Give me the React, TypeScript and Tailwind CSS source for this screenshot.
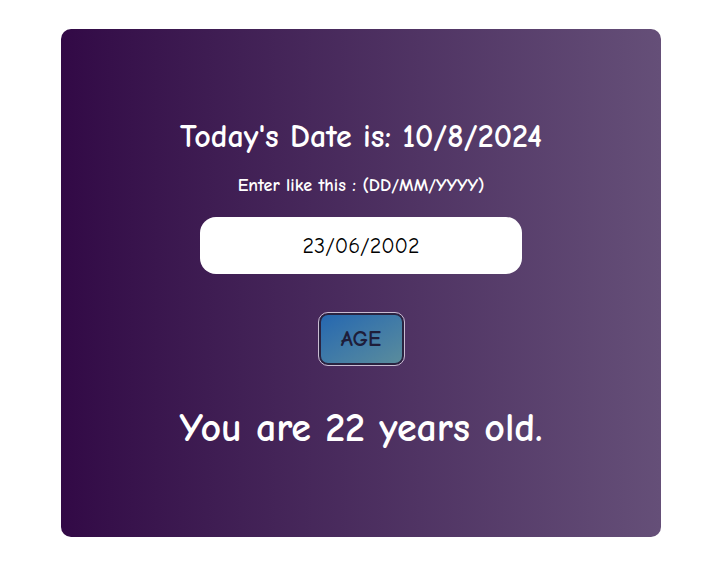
export default function App() {
  const font = { fontFamily: '"Comic Sans MS", "Comic Neue", "Open Sans", sans-serif' };
  return (
    <div className="min-h-screen bg-white flex justify-center pt-[29px] pr-[2px]" style={font}>
      <div className="w-[600px] h-[508px] rounded-[10px] bg-gradient-to-r from-[#320946] to-[#654f78] flex flex-col items-center text-white">
        <h1 className="mt-[92px] text-[32px] font-bold leading-none">Today's Date is: 10/8/2024</h1>
        <p className="mt-[24px] text-[18px] font-bold leading-none">Enter like this : (DD/MM/YYYY)</p>
        <input
          defaultValue="23/06/2002"
          className="mt-[22px] w-[322px] h-[57px] rounded-[16px] bg-white text-black text-center text-[22px] outline-none"
          style={font}
        />
        <button
          className="mt-[39px] w-[85px] h-[52px] rounded-[9px] border-2 border-[#2a2340] outline outline-1 outline-[#c9bcd3] bg-gradient-to-br from-[#2567b0] to-[#5a8c9c] text-[#1e1d3a] text-[22px] font-extrabold"
          style={font}
        >
          AGE
        </button>
        <p className="mt-[43px] text-[40px] font-bold leading-none">You are 22 years old.</p>
      </div>
    </div>
  );
}
